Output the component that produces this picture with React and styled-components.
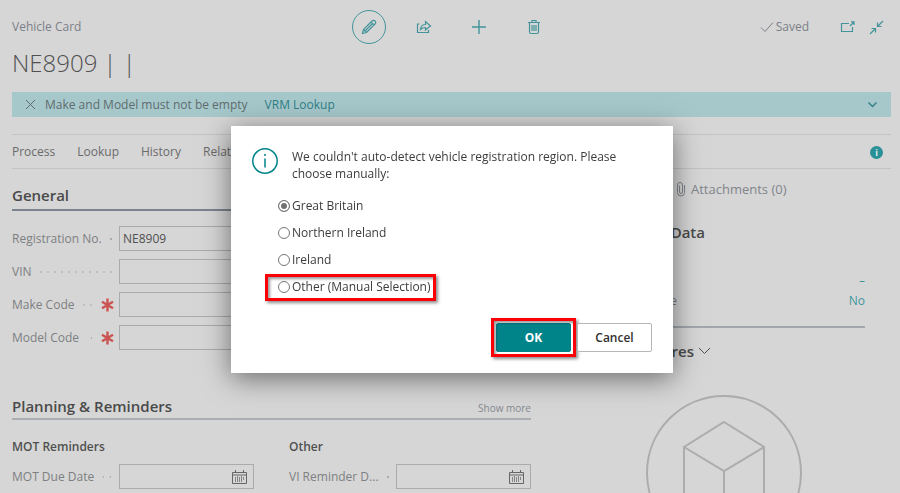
import React, { useState } from "react";
import styled, { createGlobalStyle } from "styled-components";

const teal = "#43949a";
const Global = createGlobalStyle`
  *, *::before, *::after { box-sizing: border-box; }
  html, body, #root { height: 100%; }
  body {
    margin: 0;
    overflow: hidden;
    background: #d6d6d6;
    color: #505050;
    font: 12px/18px "Open Sans", "Noto Sans", sans-serif;
  }
  button, input { font: inherit; color: inherit; }
  button { cursor: pointer; }
`;

const Page = styled.div`
  height: 100%;
  overflow: hidden;
  padding: 0 9px 0 12px;
`;
const TopBar = styled.header`
  display: grid;
  grid-template-columns: 1fr auto 1fr;
  align-items: center;
  height: 54px;
  color: #7b8088;
`;
const Commands = styled.div`
  display: flex;
  align-items: center;
  gap: 21px;
`;
const IconButton = styled.button`
  display: grid;
  place-items: center;
  width: 34px;
  height: 34px;
  padding: 0;
  border: 1px solid ${(p) => (p.$ring ? teal : "transparent")};
  border-radius: 50%;
  background: none;
  color: ${teal};
`;
const Status = styled.div`
  display: flex;
  align-items: center;
  justify-content: flex-end;
`;
const StatusText = styled.span`
  display: flex;
  align-items: center;
  gap: 2px;
  margin-right: 24px;
`;
const SmallButton = styled(IconButton)`
  width: 29px;
  height: 29px;
  border: 0;
`;
const Title = styled.h1`
  margin: 0;
  height: 38px;
  font-size: 24px;
  line-height: 18px;
  font-weight: 300;
`;
const Notice = styled.div`
  display: flex;
  align-items: center;
  height: 25px;
  padding: 0 12px;
  background: #a6c8cb;
  color: #5f6c6e;
`;
const PlainButton = styled.button`
  display: grid;
  place-items: center;
  padding: 0;
  border: 0;
  background: none;
`;
const NoticeText = styled.span`
  margin: 0 17px 0 8px;
`;
const NoticeLink = styled.a`
  flex: 1;
  color: #2f7f86;
  text-decoration: none;
`;
const ActionBar = styled.nav`
  display: flex;
  align-items: center;
  gap: 22px;
  height: 35px;
  margin-top: 17px;
  padding-top: 1px;
  border: solid #c3c3c3;
  border-width: 1px 0;
  color: #6a6a6a;
`;
const InfoDot = styled.button`
  margin-left: auto;
  margin-right: 8px;
  width: 13px;
  height: 13px;
  padding: 0;
  border: 0;
  border-radius: 50%;
  background: #2a9098;
  color: #e0eeee;
  font-size: 9px;
  line-height: 13px;
  font-weight: 700;
`;
const Columns = styled.div`
  display: grid;
  grid-template-columns: minmax(0, 519fr) minmax(0, 282fr);
  gap: 52px;
  padding-right: 26px;
`;
const SectionHead = styled.div`
  display: flex;
  align-items: center;
  justify-content: space-between;
  height: ${(p) => (p.$first ? 42 : 26)}px;
  padding-top: ${(p) => (p.$first ? 12 : 0)}px;
  margin-top: ${(p) => (p.$first ? 0 : 44)}px;
  margin-bottom: 15px;
  border-bottom: 2px solid ${(p) => (p.$first ? "#7b838e" : "#aaadb1")};
`;
const Heading = styled.h2`
  margin: 0;
  font-size: 15px;
  line-height: 20px;
  font-weight: 600;
  color: #4a4a4a;
`;
const ShowMore = styled.a`
  padding-top: 3px;
  font-size: 10px;
  color: #858990;
  text-decoration: none;
`;
const Pair = styled.div`
  display: grid;
  grid-template-columns: 1fr 1fr;
  gap: 35px;
`;
const Fields = styled.div`
  display: flex;
  flex-direction: column;
  gap: 8px;
`;
const GroupTitle = styled.h3`
  margin: 0;
  padding-top: 3px;
  font-size: 12px;
  line-height: 18px;
  font-weight: 600;
`;
const Field = styled.div`
  display: flex;
  align-items: center;
  height: 25px;
`;
const LabelCell = styled.div`
  flex: 0 0 107px;
  display: flex;
  align-items: center;
  padding-top: 1px;
  padding-right: 5px;
  gap: 6px;
  color: #7d8082;
  white-space: nowrap;
`;
const Leader = styled.span`
  flex: 1;
  height: 2px;
  background: radial-gradient(circle, #a9a9a9 1px, transparent 1px) right center / 7px 2px repeat-x;
`;
const InputBox = styled.div`
  flex: 1;
  display: flex;
  align-items: center;
  min-width: 0;
  height: 25px;
  padding: 0 6px 0 3px;
  border: 1px solid #a9abae;
`;
const Input = styled.input`
  flex: 1;
  min-width: 0;
  width: 100%;
  padding: 0;
  border: 0;
  outline: 0;
  background: none;
`;
const Side = styled.aside`
  display: flex;
  flex-direction: column;
`;
const Attach = styled.a`
  display: flex;
  align-items: center;
  gap: 5px;
  height: 40px;
  padding-left: 93px;
  font-size: 13px;
  color: #80858c;
  text-decoration: none;
`;
const FactHead = styled.div`
  display: flex;
  align-items: center;
  gap: 4px;
  height: 45px;
`;
const FactTitle = styled(Heading)`
  width: ${(p) => p.$w}px;
  text-align: right;
  white-space: nowrap;
`;
const Facts = styled.dl`
  margin: 0;
  padding: 17px 0 15px;
  border-bottom: 2px solid #a3a7ac;
`;
const Fact = styled.div`
  display: flex;
  justify-content: space-between;
  line-height: 20px;
  height: 20px;
`;
const FactLabel = styled.dt`
  width: 94px;
  text-align: right;
  color: #7d8082;
`;
const FactValue = styled.dd`
  margin: 0;
  color: #3f979d;
`;
const Picture = styled.svg`
  align-self: center;
  margin-top: 22px;
  flex: none;
`;

const Overlay = styled.div`
  position: fixed;
  inset: 0;
  display: grid;
  place-items: center;
  padding: 6px 0 0 4px;
`;
const Dialog = styled.form`
  width: 442px;
  max-width: 100%;
  padding: 22px 21px 21px;
  background: #fff;
  color: #3c3c3c;
  box-shadow: 0 5px 26px rgba(0, 0, 0, 0.5);
`;
const Message = styled.div`
  display: flex;
  gap: 14px;
`;
const MessageText = styled.p`
  flex: 1;
  margin: 0;
  line-height: 17px;
`;
const Options = styled.div`
  display: grid;
  justify-items: start;
  gap: 9px;
  margin: 15px 0 27px 26px;
`;
const marker = `
  content: "";
  position: absolute;
  border: 3px solid #fb0007;
  box-shadow: 2px 2px 3px rgba(0, 0, 0, 0.45), inset 2px 2px 3px rgba(0, 0, 0, 0.4);
  pointer-events: none;
`;
const Option = styled.label`
  position: relative;
  display: flex;
  align-items: center;
  gap: 2px;
  &::after {
    ${(p) => p.$marked && marker + "inset: -4px -5px -5px -13px;"}
  }
`;
const Radio = styled.input`
  appearance: none;
  width: 12px;
  height: 12px;
  margin: 0;
  border: 1px solid #777;
  border-radius: 50%;
  background: #fff;
  &:checked {
    background: #707070;
    box-shadow: inset 0 0 0 2px #fff;
  }
`;
const Buttons = styled.div`
  display: flex;
  justify-content: flex-end;
  gap: 6px;
`;
const Button = styled.button`
  position: relative;
  width: 75px;
  height: 29px;
  padding: 0;
  border: 1px solid ${(p) => (p.$primary ? "#00848a" : "#b4b6b8")};
  border-radius: 2px;
  background: ${(p) => (p.$primary ? "#00848a" : "#fff")};
  color: ${(p) => (p.$primary ? "#fff" : "#303030")};
  font-weight: ${(p) => (p.$primary ? 700 : 600)};
  &::after {
    ${(p) => p.$primary && marker + "inset: -6px;"}
  }
`;

const Icon = ({ w = 16, h = w, sw = 1, children }) => (
  <svg width={w} height={h} viewBox={`0 0 ${w} ${h}`} fill="none" stroke="currentColor" strokeWidth={sw} aria-hidden="true">
    {children}
  </svg>
);
const Calendar = () => (
  <Icon w={15} h={14}>
    <path d="M.5 2.5h14v11H.5zM.5 5h14M3.5 0v3M11.5 0v3" stroke="#666" />
    <path d="M3.5 7v5M5.5 6v6M7.5 7v5M9.5 6v6M11.5 7v3" stroke="#858585" />
  </Icon>
);
const Star = () => (
  <Icon w={13} h={14} sw={2.4}>
    <path d="M6.5 .5v13M1 3.700l11 6.600M12 3.700l-11 6.600" stroke="#cb5452" />
  </Icon>
);

function FormField({ id, label, required, date, value = "" }) {
  return (
    <Field>
      <LabelCell>
        <label htmlFor={id}>{label}</label>
        <Leader />
        {required && <Star />}
      </LabelCell>
      <InputBox>
        <Input id={id} defaultValue={value} />
        {date && (
          <PlainButton type="button" aria-label="Pick a date">
            <Calendar />
          </PlainButton>
        )}
      </InputBox>
    </Field>
  );
}

const regions = ["Great Britain", "Northern Ireland", "Ireland", "Other (Manual Selection)"];

export default function App() {
  const [region, setRegion] = useState(regions[0]);
  return (
    <>
      <Global />
      <Page>
        <TopBar>
          <span>Vehicle Card</span>
          <Commands>
            <IconButton $ring aria-label="Edit">
              <Icon>
                <path d="M1.500 14.500l1-4L11 2q1.500-1.300 3 0t0 3L5.500 13.500zM2.500 10.500l3 3M10 3l3 3M4 12l7.500-7.500" strokeWidth="1.200" />
              </Icon>
            </IconButton>
            <IconButton aria-label="Share">
              <Icon>
                <path d="M3.500 5h-2v8.500h11V11M4.500 10.500q.5-5 5-5V2.500l5 4.500-5 4V8.500q-3 0-5 2z" strokeWidth="1.200" />
              </Icon>
            </IconButton>
            <IconButton aria-label="New">
              <Icon>
                <path d="M8 1v14M1 8h14" strokeWidth="1.400" />
              </Icon>
            </IconButton>
            <IconButton aria-label="Delete">
              <Icon>
                <path d="M2 3.500h12M6 3V1.500h4V3M3.500 3.500V13q0 1.500 1.500 1.500h6q1.500 0 1.500-1.500V3.500M6 6v6M8 6v6M10 6v6" strokeWidth="1.200" />
              </Icon>
            </IconButton>
          </Commands>
          <Status>
            <StatusText>
              <Icon w={14} h={12}>
                <path d="M1 6.500l4 4L13 1.500" />
              </Icon>
              Saved
            </StatusText>
            <SmallButton aria-label="Open in new window">
              <Icon w={15} h={12}>
                <path d="M9 2.500H1.500v8h11V6M10 5L14 1M11 .900h3V4" strokeWidth="1.200" />
              </Icon>
            </SmallButton>
            <SmallButton aria-label="Collapse">
              <Icon w={15} h={15}>
                <path d="M1 14l5.500-5.500M2.500 8.500h4v4M14 1L8.500 6.500M8.500 2.500v4h4" strokeWidth="1.200" />
              </Icon>
            </SmallButton>
          </Status>
        </TopBar>
        <Title>NE8909 | |</Title>
        <Notice>
          <PlainButton aria-label="Dismiss">
            <Icon w={13}>
              <path d="M2 2l9 9M11 2l-9 9" />
            </Icon>
          </PlainButton>
          <NoticeText>Make and Model must not be empty</NoticeText>
          <NoticeLink href="#lookup">VRM Lookup</NoticeLink>
          <PlainButton aria-label="Expand">
            <Icon w={13} h={8}>
              <path d="M2.500 1.500l4 4 4-4" stroke="#2f7f86" strokeWidth="1.400" />
            </Icon>
          </PlainButton>
        </Notice>
        <ActionBar>
          <PlainButton>Process</PlainButton>
          <PlainButton>Lookup</PlainButton>
          <PlainButton>History</PlainButton>
          <PlainButton>Related</PlainButton>
          <InfoDot aria-label="Information">i</InfoDot>
        </ActionBar>
        <Columns>
          <main>
            <SectionHead $first>
              <Heading>General</Heading>
            </SectionHead>
            <Pair>
              <Fields>
                <FormField id="reg" label="Registration No." value="NE8909" />
                <FormField id="vin" label="VIN" />
                <FormField id="make" label="Make Code" required />
                <FormField id="model" label="Model Code" required />
              </Fields>
            </Pair>
            <SectionHead>
              <Heading>Planning &amp; Reminders</Heading>
              <ShowMore href="#more">Show more</ShowMore>
            </SectionHead>
            <Pair>
              <Fields>
                <GroupTitle>MOT Reminders</GroupTitle>
                <FormField id="mot" label="MOT Due Date" date />
              </Fields>
              <Fields>
                <GroupTitle>Other</GroupTitle>
                <FormField id="vi" label="VI Reminder D..." date />
              </Fields>
            </Pair>
          </main>
          <Side>
            <Attach href="#attachments">
              <Icon w={10} h={16}>
                <path d="M3.500 4.500V11a1.500 1.500 0 0 0 3 0V4a2 2 0 0 0-5 0v7.500a3.500 3.500 0 0 0 7 0V4" />
              </Icon>
              Attachments (0)
            </Attach>
            <FactHead>
              <FactTitle $w={122}>Data</FactTitle>
            </FactHead>
            <Facts>
              <Fact>
                <FactLabel />
                <FactValue>–</FactValue>
              </Fact>
              <Fact>
                <FactLabel>Available</FactLabel>
                <FactValue>No</FactValue>
              </Fact>
            </Facts>
            <FactHead>
              <FactTitle $w={111}>res</FactTitle>
              <Icon w={13} h={8}>
                <path d="M1 1l5.500 5.500L12 1" />
              </Icon>
            </FactHead>
            <Picture width="156" height="156" viewBox="0 0 156 156" fill="none" stroke="#acacac" strokeWidth="2">
              <circle cx="78" cy="78" r="77" />
              <path d="M78 27l40 25v48l-40 25-40-25V52zM38 52l40 24 40-24M78 76v49" />
            </Picture>
          </Side>
        </Columns>
      </Page>
      <Overlay>
        <Dialog role="dialog" aria-modal="true" onSubmit={(e) => e.preventDefault()}>
          <Message>
            <Icon w={26}>
              <circle cx="13" cy="13" r="12.200" stroke="#00848a" strokeWidth="1.500" />
              <path d="M13 10.500v9M13 6v2" stroke="#00848a" strokeWidth="1.500" />
            </Icon>
            <MessageText>We couldn't auto-detect vehicle registration region. Please choose manually:</MessageText>
          </Message>
          <Options role="radiogroup" aria-label="Region">
            {regions.map((r, i) => (
              <Option key={r} $marked={i === 3}>
                <Radio type="radio" name="region" value={r} checked={region === r} onChange={() => setRegion(r)} />
                {r}
              </Option>
            ))}
          </Options>
          <Buttons>
            <Button $primary type="submit">OK</Button>
            <Button type="button">Cancel</Button>
          </Buttons>
        </Dialog>
      </Overlay>
    </>
  );
}
